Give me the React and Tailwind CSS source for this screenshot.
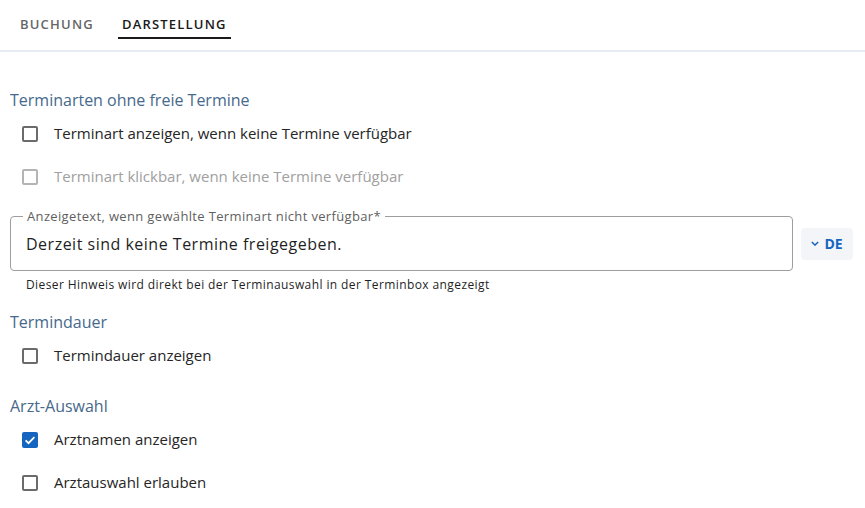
import React, { useState } from 'react';

const Checkbox = ({ checked, disabled, label, onChange }) => (
  <label className={`flex items-center h-[43px] pl-[22px] ${disabled ? 'cursor-default' : 'cursor-pointer'}`}>
    <span
      className={`w-4 h-4 rounded-[2px] flex items-center justify-center shrink-0 ${
        checked ? 'bg-[#1565c0]' : disabled ? 'border-2 border-[#b4b4b4]' : 'border-2 border-[#6b6b6b]'
      }`}
      onClick={() => !disabled && onChange(!checked)}
    >
      {checked && (
        <svg viewBox="0 0 24 24" className="w-[14px] h-[14px]" fill="none" stroke="#fff" strokeWidth="3">
          <path d="M4.5 12.5l5 5L19.5 7" />
        </svg>
      )}
    </span>
    <span className={`ml-4 text-[15px] ${disabled ? 'text-[#a0a0a0]' : 'text-[#262626]'}`}>{label}</span>
  </label>
);

const Section = ({ title }) => (
  <h2 className="text-[16px] font-medium text-[#46698c] leading-5 pl-[10px]">{title}</h2>
);

export default function App() {
  const [tab, setTab] = useState('darstellung');
  const [opts, setOpts] = useState({ show: false, click: false, dauer: false, namen: true, wahl: false });
  const [text, setText] = useState('Derzeit sind keine Termine freigegeben.');
  const toggle = (k) => (v) => setOpts(prev => ({ ...prev, [k]: v }));

  return (
    <div className="w-[865px] h-[508px] bg-white overflow-hidden font-['Open_Sans',sans-serif]">
      <div className="h-[52px] flex items-start gap-5 px-4 border-b-2 border-[#e6ecf1]">
        {[['buchung', 'BUCHUNG'], ['darstellung', 'DARSTELLUNG']].map(([key, name]) => (
          <button
            key={key}
            onClick={() => setTab(key)}
            className={`px-1 pt-[15px] pb-[4px] leading-[18px] text-[13px] font-semibold tracking-[1.2px] border-b-2 ${
              tab === key ? 'text-[#1a1a1a] border-[#1a1a1a]' : 'text-[#666] border-transparent'
            }`}
          >
            {name}
          </button>
        ))}
      </div>

      <div className="pt-[38px]">
        <Section title="Terminarten ohne freie Termine" />
        <div className="mt-[2px]">
          <Checkbox label="Terminart anzeigen, wenn keine Termine verfügbar" checked={opts.show} onChange={toggle('show')} />
          <Checkbox label="Terminart klickbar, wenn keine Termine verfügbar" checked={opts.click} disabled onChange={toggle('click')} />
        </div>

        <div className="flex items-center gap-2 pl-[10px] pr-3 mt-[18px]">
          <div className="relative flex-1 h-[55px] border border-[#9e9e9e] rounded-[4px] pl-[15px] flex items-center">
            <span className="absolute left-[12px] -top-[9px] bg-white px-1 text-[13px] leading-4 tracking-[0.35px] text-[#5f5f5f]">
              Anzeigetext, wenn gewählte Terminart nicht verfügbar*
            </span>
            <input
              value={text}
              onChange={e => setText(e.target.value)}
              className="w-full outline-none text-[16px] text-[#1f1f1f] tracking-[0.5px]"
            />
          </div>
          <button className="h-[32px] w-[52px] rounded-[4px] bg-[#f3f5f8] flex items-center justify-center gap-[5px] text-[#1565c0] text-[14px] font-bold">
            <svg viewBox="0 0 10 6" className="w-[8px] h-[5px]" fill="none" stroke="currentColor" strokeWidth="1.8">
              <path d="M1 1l4 4 4-4" />
            </svg>
            DE
          </button>
        </div>
        <p className="pl-[26px] mt-[5px] text-[12px] leading-[17px] tracking-[0.4px] text-[#1f1f1f]">
          Dieser Hinweis wird direkt bei der Terminauswahl in der Terminbox angezeigt
        </p>

        <div className="mt-[19px]">
          <Section title="Termindauer" />
          <div className="mt-[2px]">
            <Checkbox label="Termindauer anzeigen" checked={opts.dauer} onChange={toggle('dauer')} />
          </div>
        </div>

        <div className="mt-[19px]">
          <Section title="Arzt-Auswahl" />
          <div className="mt-[2px]">
            <Checkbox label="Arztnamen anzeigen" checked={opts.namen} onChange={toggle('namen')} />
            <Checkbox label="Arztauswahl erlauben" checked={opts.wahl} onChange={toggle('wahl')} />
          </div>
        </div>
      </div>
    </div>
  );
}
